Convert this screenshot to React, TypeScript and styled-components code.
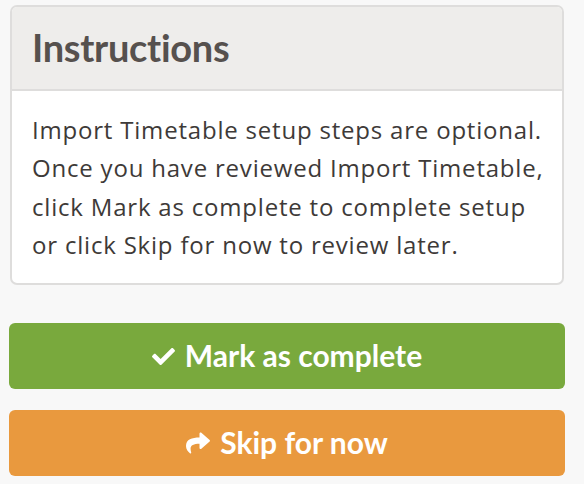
import React from "react";
import styled, { createGlobalStyle } from "styled-components";
import { FaCheck, FaShare } from "react-icons/fa";

const Global = createGlobalStyle`
  html, body { margin: 0; padding: 0; background: #f8f8f8; }
  body { font-family: Lato, "Liberation Sans", sans-serif; }
`;

const Page = styled.div`
  width: 556px;
  padding: 5px 0 0 9px;
  display: flex;
  flex-direction: column;
`;

const Panel = styled.section`
  margin: 0 1px;
  background: #fff;
  border: 2px solid #dedddc;
  border-radius: 7px;
  overflow: hidden;
`;

const PanelHeader = styled.div`
  background: #eeedeb;
  border-bottom: 2px solid #dedddc;
  height: 82px;
  display: flex;
  align-items: center;
  padding: 0 20px;
`;

const Title = styled.h2`
  margin: 0 0 3px;
  font-family: Lato, "Liberation Sans", sans-serif;
  font-size: 38px;
  letter-spacing: -0.3px;
  font-weight: 700;
  color: #56514e;
`;

const PanelBody = styled.div`
  height: 154px;
  padding: 19.5px 20px 18.5px 20px;
  font-family: "Open Sans", "Liberation Sans", sans-serif;
  font-size: 24px;
  letter-spacing: 0.8px;
  line-height: 38.5px;
  color: #3e3a38;
`;

const Line = styled.div`
  white-space: nowrap;
`;

const Actions = styled.div`
  margin-top: 38px;
  display: flex;
  flex-direction: column;
  gap: 21px;
`;

const Button = styled.button<{ $bg: string }>`
  height: 66px;
  border: none;
  border-radius: 6px;
  background: ${(p) => p.$bg};
  color: #fff;
  font-family: Lato, "Liberation Sans", sans-serif;
  font-size: 30px;
  font-weight: 700;
  display: flex;
  align-items: center;
  justify-content: center;
  gap: 10px;
  padding: 0 0 2px;
  cursor: pointer;
`;

const Icon = styled.span<{ $size: number }>`
  display: inline-flex;
  font-size: ${(p) => p.$size}px;
  margin-top: 2px;
`;

export default function App() {
  return (
    <>
      <Global />
      <Page>
        <Panel>
          <PanelHeader>
            <Title>Instructions</Title>
          </PanelHeader>
          <PanelBody>
            <Line>Import Timetable setup steps are optional.</Line>
            <Line>Once you have reviewed Import Timetable,</Line>
            <Line>click Mark as complete to complete setup</Line>
            <Line>or click Skip for now to review later.</Line>
          </PanelBody>
        </Panel>
        <Actions>
          <Button $bg="#79a93d">
            <Icon $size={23}>
              <FaCheck />
            </Icon>
            Mark as complete
          </Button>
          <Button $bg="#e9993e">
            <Icon $size={24}>
              <FaShare />
            </Icon>
            Skip for now
          </Button>
        </Actions>
      </Page>
    </>
  );
}
